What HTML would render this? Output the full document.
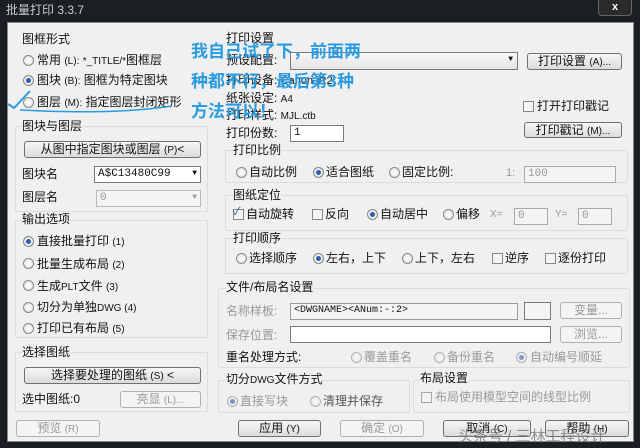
<!DOCTYPE html>
<html><head><meta charset="utf-8"><style>
*{box-sizing:border-box;margin:0;padding:0}
body{width:640px;height:448px;overflow:hidden;background:#1a1f24;font-family:"Liberation Sans","Noto Sans CJK SC",sans-serif;font-size:12px;color:#111;position:relative}
.a{position:absolute;white-space:nowrap;line-height:14px}
.s{font-size:10px}
.body{position:absolute;left:7px;top:22px;width:627px;height:420px;background:#f0f0f0;border:1px solid #888}
.btn{position:absolute;border:1px solid #707070;border-radius:3px;background:linear-gradient(#f6f6f6,#dcdcdc);text-align:center;line-height:15px;font-size:12px}
.dis{color:#999;border-color:#b0b0b0;background:#f4f4f4}
.inp{position:absolute;border:1px solid #7a7a7a;background:#fff;font-size:11px;line-height:14px;padding-left:3px;font-family:"Liberation Mono","Noto Sans CJK SC",monospace}
.rd{position:absolute;width:11px;height:11px;border-radius:50%;border:1px solid #888;background:radial-gradient(#fff,#ddd)}
.rd.on::after{content:"";position:absolute;left:2px;top:2px;width:5px;height:5px;border-radius:50%;background:#2a5fb0}
.cb{position:absolute;width:11px;height:11px;border:1px solid #888;background:#f4f4f4}
.grp{position:absolute;border:1px solid #dcdcdc;border-radius:2px}
.g{color:#999}
.blue{position:absolute;color:#2a9be0;font-size:17px;font-weight:bold;white-space:nowrap;line-height:20px;font-family:"Noto Sans CJK SC",sans-serif}
</style></head><body>
<div class="a" style="left:6px;top:3px;color:#ccc;font-size:12px">批量打印 3.3.7</div>
<div style="position:absolute;left:598px;top:0;width:34px;height:16px;border:1px solid #666;border-top:none;border-radius:0 0 4px 4px;background:#2a2a2a;color:#fff;text-align:center;font-size:11px;line-height:15px;font-weight:bold">x</div>
<div class="body"></div>

<!-- left -->
<div class="a" style="left:22px;top:32px">图框形式</div>
<div class="rd" style="left:23px;top:55px"></div><div class="a" style="left:37px;top:53px">常用 <span class="s">(L):</span> <span class="s">*_TITLE/*</span>图框层</div>
<div class="rd on" style="left:23px;top:75px"></div><div class="a" style="left:37px;top:73px">图块 <span class="s">(B):</span> 图框为特定图块</div>
<div class="rd" style="left:23px;top:97px"></div><div class="a" style="left:37px;top:95px">图层 <span class="s">(M):</span> 指定图层封闭矩形</div>
<div class="grp" style="left:15px;top:126px;width:193px;height:86px"></div>
<div class="a" style="left:22px;top:119px;background:#f0f0f0">图块与图层</div>
<div class="btn" style="left:24px;top:141px;width:177px;height:17px">从图中指定图块或图层 <span class="s">(P)</span>&lt;</div>
<div class="a" style="left:22px;top:167px">图块名</div>
<div class="inp" style="left:94px;top:166px;width:107px;height:17px">A$C13480C99<span style="position:absolute;right:3px;font-size:8px">▼</span></div>
<div class="a" style="left:22px;top:190px">图层名</div>
<div class="inp g" style="left:96px;top:190px;width:105px;height:17px;border-color:#bbb;background:#f4f4f4">0<span style="position:absolute;right:3px;font-size:8px">▼</span></div>
<div class="grp" style="left:15px;top:220px;width:193px;height:118px"></div>
<div class="a" style="left:22px;top:212px;background:#f0f0f0">输出选项</div>
<div class="rd on" style="left:23px;top:236px"></div><div class="a" style="left:37px;top:234px">直接批量打印 <span class="s">(1)</span></div>
<div class="rd" style="left:23px;top:258px"></div><div class="a" style="left:37px;top:257px">批量生成布局 <span class="s">(2)</span></div>
<div class="rd" style="left:23px;top:280px"></div><div class="a" style="left:37px;top:279px">生成<span class="s">PLT</span>文件 <span class="s">(3)</span></div>
<div class="rd" style="left:23px;top:302px"></div><div class="a" style="left:37px;top:300px">切分为单独<span class="s">DWG (4)</span></div>
<div class="rd" style="left:23px;top:323px"></div><div class="a" style="left:37px;top:321px">打印已有布局 <span class="s">(5)</span></div>
<div class="grp" style="left:15px;top:352px;width:193px;height:60px"></div>
<div class="a" style="left:22px;top:345px;background:#f0f0f0">选择图纸</div>
<div class="btn" style="left:24px;top:367px;width:177px;height:17px">选择要处理的图纸 <span class="s">(S)</span> &lt;</div>
<div class="a" style="left:22px;top:392px">选中图纸:0</div>
<div class="btn dis" style="left:120px;top:391px;width:81px;height:17px">亮显 <span class="s">(L)...</span></div>
<div class="btn dis" style="left:16px;top:420px;width:84px;height:17px">预览 <span class="s">(R)</span></div>

<!-- right -->
<div class="a" style="left:226px;top:31px">打印设置</div>
<div class="a" style="left:226px;top:53px">预设配置:</div>
<div class="inp" style="left:290px;top:52px;width:228px;height:18px;background:linear-gradient(#f8f8f8,#e4e4e4)"><span style="position:absolute;right:4px;font-size:8px">▼</span></div>
<div class="btn" style="left:527px;top:53px;width:95px;height:17px">打印设置 <span class="s">(A)...</span></div>
<div class="a" style="left:226px;top:73px">打印设备: <span style="font-size:11px">Canon iR2</span></div>
<div class="a" style="left:226px;top:91px">纸张设定: <span class="s">A4</span></div>
<div class="a" style="left:226px;top:108px">打印样式: <span class="s">MJL.ctb</span></div>
<div class="cb" style="left:523px;top:101px"></div><div class="a" style="left:537px;top:99px">打开打印戳记</div>
<div class="btn" style="left:524px;top:122px;width:98px;height:16px">打印戳记 <span class="s">(M)...</span></div>
<div class="a" style="left:226px;top:126px">打印份数:</div>
<div class="inp" style="left:290px;top:125px;width:54px;height:17px">1</div>
<div class="grp" style="left:225px;top:150px;width:403px;height:33px"></div>
<div class="a" style="left:233px;top:143px;background:#f0f0f0">打印比例</div>
<div class="rd" style="left:236px;top:167px"></div><div class="a" style="left:249px;top:165px">自动比例</div>
<div class="rd on" style="left:313px;top:167px"></div><div class="a" style="left:326px;top:165px">适合图纸</div>
<div class="rd" style="left:389px;top:167px"></div><div class="a" style="left:402px;top:165px">固定比例:</div>
<div class="a g" style="left:506px;top:166px;font-size:11px">1:</div>
<div class="inp g" style="left:524px;top:166px;width:92px;height:17px;border-color:#aaa;background:#f4f4f4">100</div>
<div class="grp" style="left:225px;top:195px;width:403px;height:36px"></div>
<div class="a" style="left:233px;top:188px;background:#f0f0f0">图纸定位</div>
<div class="cb" style="left:233px;top:209px"></div><div class="a" style="left:246px;top:207px">自动旋转</div>
<div class="a" style="left:233px;top:205px;color:#2a5fb0;font-size:11px">✓</div>
<div class="cb" style="left:312px;top:209px"></div><div class="a" style="left:325px;top:207px">反向</div>
<div class="rd on" style="left:367px;top:209px"></div><div class="a" style="left:380px;top:207px">自动居中</div>
<div class="rd" style="left:443px;top:209px"></div><div class="a" style="left:456px;top:207px">偏移</div>
<div class="a g" style="left:490px;top:208px;font-size:10px">X=</div>
<div class="inp g" style="left:514px;top:208px;width:34px;height:17px;border-color:#aaa;background:#f4f4f4">0</div>
<div class="a g" style="left:555px;top:208px;font-size:10px">Y=</div>
<div class="inp g" style="left:578px;top:208px;width:34px;height:17px;border-color:#aaa;background:#f4f4f4">0</div>
<div class="grp" style="left:225px;top:238px;width:403px;height:36px"></div>
<div class="a" style="left:233px;top:231px;background:#f0f0f0">打印顺序</div>
<div class="rd" style="left:236px;top:253px"></div><div class="a" style="left:249px;top:251px">选择顺序</div>
<div class="rd on" style="left:313px;top:253px"></div><div class="a" style="left:326px;top:251px">左右，上下</div>
<div class="rd" style="left:402px;top:253px"></div><div class="a" style="left:415px;top:251px">上下，左右</div>
<div class="cb" style="left:492px;top:253px"></div><div class="a" style="left:505px;top:251px">逆序</div>
<div class="cb" style="left:545px;top:253px"></div><div class="a" style="left:558px;top:251px">逐份打印</div>
<div class="grp" style="left:218px;top:288px;width:412px;height:80px"></div>
<div class="a" style="left:226px;top:280px;background:#f0f0f0">文件/布局名设置</div>
<div class="a g" style="left:226px;top:304px">名称样板:</div>
<div class="inp" style="left:290px;top:303px;width:228px;height:17px;border-color:#999;background:#f4f4f4;font-size:10px">&lt;DWGNAME&gt;&lt;ANum:-:2&gt;</div>
<div class="inp" style="left:524px;top:302px;width:27px;height:18px;background:#f4f4f4"></div>
<div class="btn dis" style="left:560px;top:302px;width:62px;height:17px">变量...</div>
<div class="a g" style="left:226px;top:328px">保存位置:</div>
<div class="inp" style="left:290px;top:326px;width:261px;height:17px"></div>
<div class="btn dis" style="left:560px;top:326px;width:62px;height:17px">浏览...</div>
<div class="a" style="left:226px;top:350px">重名处理方式:</div>
<div class="rd" style="left:351px;top:352px;opacity:.6"></div><div class="a g" style="left:364px;top:350px">覆盖重名</div>
<div class="rd" style="left:434px;top:352px;opacity:.6"></div><div class="a g" style="left:447px;top:350px">备份重名</div>
<div class="rd on" style="left:516px;top:352px;opacity:.6"></div><div class="a g" style="left:530px;top:350px">自动编号顺延</div>
<div class="grp" style="left:218px;top:380px;width:192px;height:33px"></div>
<div class="a" style="left:226px;top:372px;background:#f0f0f0">切分<span class="s">DWG</span>文件方式</div>
<div class="rd on" style="left:227px;top:396px;opacity:.6"></div><div class="a g" style="left:240px;top:394px">直接写块</div>
<div class="rd" style="left:310px;top:396px;opacity:.6"></div><div class="a" style="left:323px;top:394px;color:#555">清理并保存</div>
<div class="grp" style="left:413px;top:380px;width:217px;height:33px"></div>
<div class="a" style="left:420px;top:371px;background:#f0f0f0">布局设置</div>
<div class="cb" style="left:421px;top:392px;opacity:.7"></div><div class="a g" style="left:435px;top:390px">布局使用模型空间的线型比例</div>
<div class="btn" style="left:238px;top:420px;width:83px;height:17px">应用 <span class="s">(Y)</span></div>
<div class="btn dis" style="left:340px;top:420px;width:84px;height:17px">确定 <span class="s">(O)</span></div>
<div class="btn" style="left:443px;top:420px;width:88px;height:17px">取消 <span class="s">(C)</span></div>
<div class="btn" style="left:545px;top:420px;width:84px;height:17px">帮助 <span class="s">(H)</span></div>
<div class="a" style="left:458px;top:428px;color:rgba(120,120,120,.8);font-size:15px;line-height:18px">头条号 / 三林工程设计</div>

<!-- annotation -->
<div class="blue" style="left:191px;top:40px">我自己试了下，前面两</div>
<div class="blue" style="left:191px;top:70px">种都不行，最后第3种</div>
<div class="blue" style="left:191px;top:100px">方法可以！</div>
<svg style="position:absolute;left:0;top:0" width="640" height="448"><path d="M8 104 L14 108 L30 91" stroke="#2a9be0" stroke-width="2" fill="none"/><path d="M20 110 C60 112 120 114 172 106" stroke="#2a9be0" stroke-width="1.5" fill="none"/></svg>
</body></html>
